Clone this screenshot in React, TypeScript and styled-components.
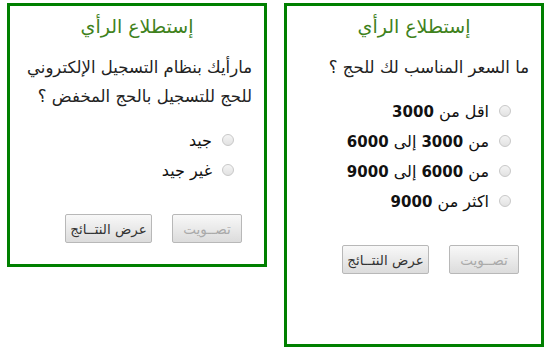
import React from 'react';
import { createGlobalStyle, styled } from 'styled-components';

const GlobalStyle = createGlobalStyle`
  html, body {
    margin: 0;
    padding: 0;
    background: #ffffff;
  }
  body {
    font-family: "DejaVu Sans", "Noto Sans", sans-serif;
  }
`;

interface PollOption {
  id: string;
  label: React.ReactNode;
}

interface PollData {
  id: string;
  question: string;
  options: PollOption[];
  height: number;
}

const polls: PollData[] = [
  {
    id: 'price',
    question: 'ما السعر المناسب لك للحج ؟',
    height: 344,
    options: [
      { id: 'p1', label: <>اقل من <b>3000</b></> },
      { id: 'p2', label: <>من <b>3000</b> إلى <b>6000</b></> },
      { id: 'p3', label: <>من <b>6000</b> إلى <b>9000</b></> },
      { id: 'p4', label: <>اكثر من <b>9000</b></> },
    ],
  },
  {
    id: 'register',
    question: 'مارأيك بنظام التسجيل الإلكتروني للحج للتسجيل بالحج المخفض ؟',
    height: 264,
    options: [
      { id: 'r1', label: 'جيد' },
      { id: 'r2', label: 'غير جيد' },
    ],
  },
];

const Poll: React.FC<{ poll: PollData }> = ({ poll }) => (
  <PollBox $height={poll.height}>
    <Title>إستطلاع الرأي</Title>
    <Question>{poll.question}</Question>
    <OptionList>
      {poll.options.map((opt) => (
        <OptionRow key={opt.id}>
          <Radio type="radio" name={poll.id} />
          <OptionText>{opt.label}</OptionText>
        </OptionRow>
      ))}
    </OptionList>
    <ButtonRow>
      <Button disabled $width={70}>تصــويت</Button>
      <Button $width={87}>عرض النتــائج</Button>
    </ButtonRow>
  </PollBox>
);

const App: React.FC = () => (
  <>
    <GlobalStyle />
    <Page>
      {polls.map((p) => (
        <Poll key={p.id} poll={p} />
      ))}
    </Page>
  </>
);

export default App;

const Page = styled.div`
  direction: rtl;
  display: flex;
  align-items: flex-start;
  gap: 17px;
  padding: 3px 11px 0 0;
`;

const PollBox = styled.div<{ $height: number }>`
  box-sizing: border-box;
  width: 260px;
  height: ${(p) => p.$height}px;
  border: 3px solid #008000;
  padding: 7px 12px 0;
  background: #fff;
`;

const Title = styled.h3`
  margin: 0;
  text-align: center;
  font-size: 19px;
  font-weight: normal;
  line-height: 26px;
  color: #40821c;
`;

const Question = styled.p`
  margin: 14px 0 0;
  font-size: 16.5px;
  line-height: 29px;
  color: #222;
`;

const OptionList = styled.div`
  display: flex;
  flex-direction: column;
  margin-top: 14px;
  padding-right: 18px;
`;

const OptionRow = styled.label`
  display: flex;
  align-items: center;
  gap: 10px;
  height: 30px;
  font-size: 16px;
  color: #111;
`;

const Radio = styled.input`
  appearance: none;
  margin: 0;
  width: 12px;
  height: 12px;
  border-radius: 50%;
  border: 1px solid #c8c8c8;
  background: linear-gradient(#f4f4f4, #e2e2e2);
  box-sizing: border-box;
`;

const OptionText = styled.span`
  b {
    font-size: 15px;
    font-weight: bold;
  }
`;

const ButtonRow = styled.div`
  display: flex;
  gap: 20px;
  margin-top: 29px;
  padding-right: 10px;
`;

const Button = styled.button<{ $width: number }>`
  width: ${(p) => p.$width}px;
  height: 29px;
  padding: 0;
  font-family: "DejaVu Sans", sans-serif;
  font-size: 13.5px;
  color: #333;
  border: 1px solid #b8b8b8;
  border-radius: 2px;
  background: linear-gradient(#f8f8f8, #dcdcdc);

  &:disabled {
    color: #aaa;
  }
`;
